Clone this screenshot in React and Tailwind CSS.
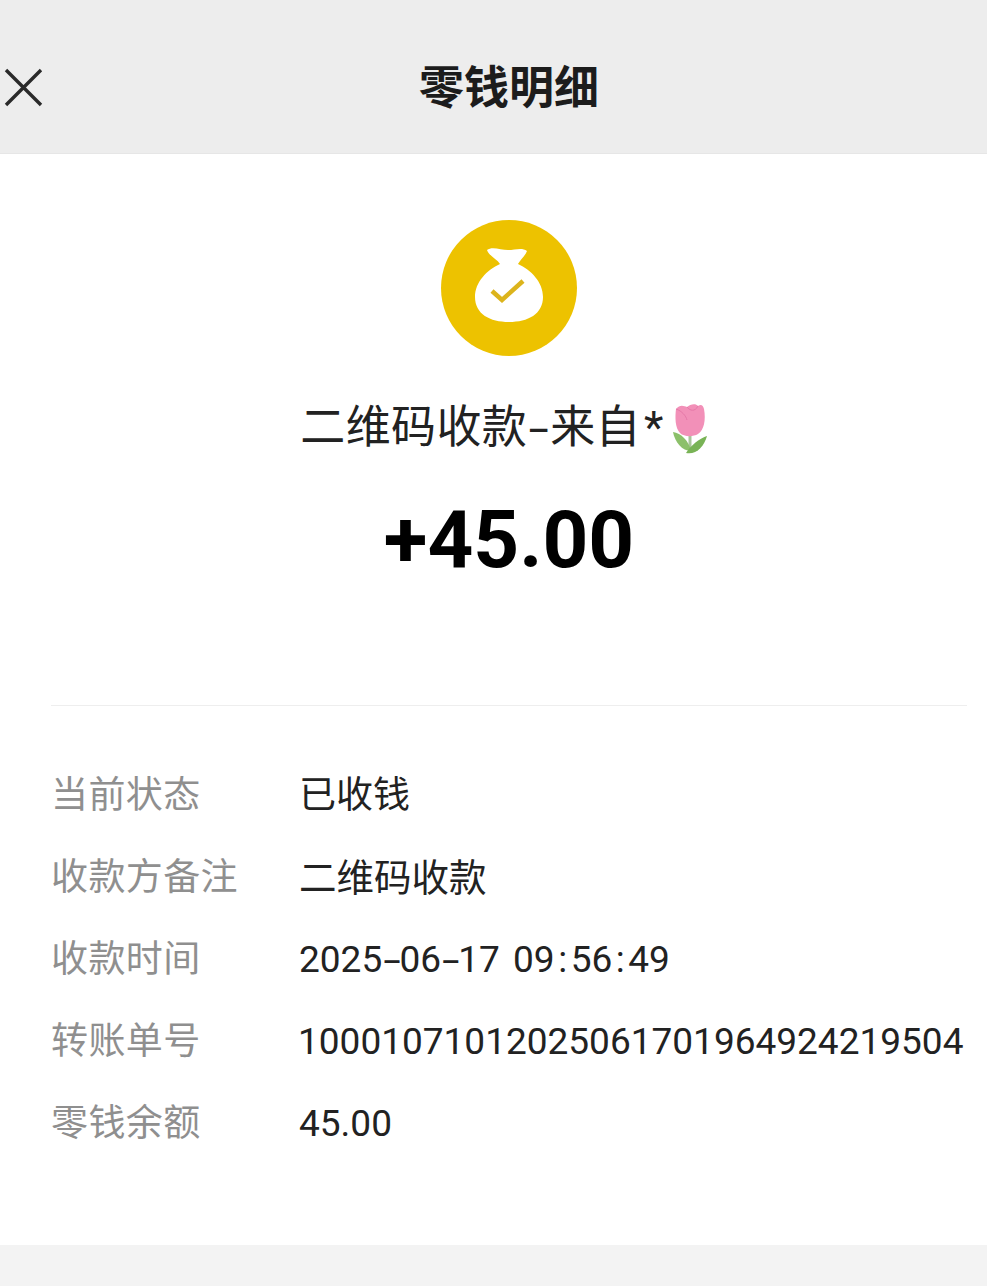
const font = { fontFamily: 'Roboto, "Noto Sans CJK SC", sans-serif' };

const Dash = () => <span className="text-[30px] tracking-[-2px] font-medium">–</span>;
const Colon = () => <span className="mx-[3.5px]">:</span>;

const rows = [
  ["当前状态", "已收钱", ""],
  ["收款方备注", "二维码收款", "text-[37.5px]"],
  [
    "收款时间",
    <>
      2025<Dash />06<Dash />17 09<Colon />56<Colon />49
    </>,
    "[word-spacing:4px]",
  ],
  ["转账单号", "10001071012025061701964924219504", "-ml-px"],
  ["零钱余额", "45.00", ""],
];

const BagIcon = () => (
  <svg width="68" height="75" viewBox="0 0 68 75" className="mt-[-8px]">
    <path
      d="M12 3 C17 -1 26 3 33 3 C40 3 47 0 52 4 C50 9 46 12 43 17 C56 23 68 35 68 50 C68 67 53 75 34 75 C15 75 0 67 0 50 C0 35 12 23 25 17 C22 12 14 9 12 3 Z"
      fill="#fff"
    />
    <path d="M17 44 L27 53 L48 34" fill="none" stroke="#dcb41c" strokeWidth="4.5" />
  </svg>
);

const Tulip = () => (
  <svg width="42" height="54" viewBox="0 0 42 54" className="ml-[6px] mt-[4px]">
    <path d="M20 30 L20 46" stroke="#a9c49a" strokeWidth="3" />
    <path d="M3 29 C11 30 19 38 21 48 C12 48 5 39 3 29 Z" fill="#8cc06a" />
    <path d="M37 33 C30 35 21 42 16 50 C26 52 34 44 37 33 Z" fill="#79b356" />
    <path
      d="M6 6 C10 1 14 3 17 4 C20 1 26 0 28 3 C31 1 33 2 34 6 C36 17 34 27 28 31 C23 34 14 34 10 30 C5 25 5 14 6 6 Z"
      fill="#f290b8"
    />
    <path d="M6 6 C12 8 16 13 17 17 M17 4 C20 8 25 9 28 3" fill="none" stroke="#e678a8" strokeWidth="1" />
  </svg>
);

export default function App() {
  return (
    <div className="w-[987px] h-[1286px] flex flex-col bg-white overflow-hidden" style={font}>
      {/* Header */}
      <div className="relative h-[154px] shrink-0 bg-[#ededed] border-b border-[#e6e6e6] flex items-start justify-center pt-[59px]">
        <svg className="absolute left-[4px] top-[68px]" width="40" height="40" viewBox="0 0 40 40">
          <path d="M2 2 L37 37 M37 2 L2 37" stroke="#2a2a2a" strokeWidth="3.4" />
        </svg>
        <h1 className="text-[45px] leading-[60px] font-bold text-[#1c1c1c] ml-[31px]">零钱明细</h1>
      </div>

      {/* Summary */}
      <div className="flex flex-col items-center pt-[66px] ml-[31px]">
        <div className="w-[136px] h-[136px] rounded-full bg-[#edc200] flex items-center justify-center">
          <BagIcon />
        </div>
        <div className="mt-[42px] mr-[6px] flex items-center h-[60px] text-[45px] text-[#222] tracking-[0.4px]">
          <span>
            二维码收款<span className="text-[35px] font-medium">–</span>来自
          </span>
          <span className="ml-[3px]">*</span>
          <Tulip />
        </div>
        <div className="mt-[37px] h-[90px] text-[80px] leading-[90px] font-bold text-black">+45.00</div>
      </div>

      {/* Details */}
      <div className="ml-[51px] mr-[20px] mt-[120px] border-t border-[#eeeeee] pt-[49px] flex flex-col">
        {rows.map(([label, value, extra]) => (
          <div key={label} className="h-[82px] flex items-start text-[37px] leading-[82px]">
            <div className="w-[248px] shrink-0 text-[#8f8f8f] tracking-[0.4px]">{label}</div>
            <div className={`text-[#222] whitespace-nowrap ${extra}`}>{value}</div>
          </div>
        ))}
      </div>

      <div className="mt-auto h-[41px] bg-[#f3f3f3]" />
    </div>
  );
}
